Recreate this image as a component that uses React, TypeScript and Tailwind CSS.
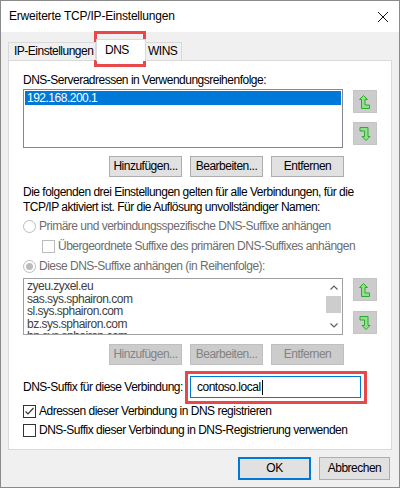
import React from 'react';

const font = { fontFamily: '"Liberation Sans", Arial, sans-serif' };

function ArrowUp() {
    return (
        <svg width="12" height="16" viewBox="0 0 12 16">
            <polygon points="4.5,1.5 8.5,5.5 6,5.5 6,11 10.5,11 10.5,14.5 2.5,14.5 2.5,5.5 0.5,5.5" fill="#8ee08a" stroke="#2fa82f" strokeWidth="1" />
        </svg>
    );
}

function ArrowDown() {
    return (
        <svg width="12" height="16" viewBox="0 0 12 16">
            <polygon points="1,1.5 9,1.5 9,10.5 11,10.5 7,14.5 3,10.5 5.5,10.5 5.5,5 1,5" fill="#8ee08a" stroke="#2fa82f" strokeWidth="1" />
        </svg>
    );
}

function SideButtons({ gap, top }: { gap: string; top: string }) {
    return (
        <div className={`flex flex-col ${gap} ${top}`}>
            <div className="w-[24px] h-[23px] bg-[#cccccc] border border-[#c4c4c4] flex items-center justify-center"><ArrowUp /></div>
            <div className="w-[24px] h-[23px] bg-[#cccccc] border border-[#c4c4c4] flex items-center justify-center"><ArrowDown /></div>
        </div>
    );
}

function Btn({ label, disabled }: { label: string; disabled?: boolean }) {
    return (
        <div className={`w-[73px] h-[21px] flex items-center justify-center border ${disabled ? 'bg-[#cccccc] border-[#bfbfbf] text-[#838383]' : 'bg-[#e1e1e1] border-[#adadad] text-black'}`}>
            {label}
        </div>
    );
}

function Radio({ checked }: { checked?: boolean }) {
    return (
        <span className="w-[13px] h-[13px] rounded-full border border-[#bcbcbc] bg-white flex items-center justify-center shrink-0">
            {checked && <span className="w-[7px] h-[7px] rounded-full bg-[#bcbcbc]" />}
        </span>
    );
}

function Check({ checked, disabled }: { checked?: boolean; disabled?: boolean }) {
    return (
        <span className={`w-[13px] h-[13px] border ${disabled ? 'border-[#bcbcbc]' : 'border-[#333333]'} bg-white flex items-center justify-center shrink-0`}>
            {checked && (
                <svg width="11" height="11" viewBox="0 0 11 11">
                    <polyline points="1.5,5.5 4,8 9.5,2" fill="none" stroke="#333333" strokeWidth="1.2" />
                </svg>
            )}
        </span>
    );
}

export default function App() {
    const suffixes = ['zyeu.zyxel.eu', 'sas.sys.sphairon.com', 'sl.sys.sphairon.com', 'bz.sys.sphairon.com', 'hn.sys.sphairon.com'];

    return (
        <div className="w-[400px] h-[488px] bg-[#f0f0f0] border border-[#8a8a8a] flex flex-col text-[12px] leading-[15px] tracking-[-0.5px] text-black relative overflow-hidden whitespace-nowrap" style={font}>
            {/* title bar */}
            <div className="h-[31px] bg-white flex items-center justify-between pl-[8px] pr-[10px] shrink-0">
                <span className="tracking-[-0.2px]">Erweiterte TCP/IP-Einstellungen</span>
                <svg width="12" height="12" viewBox="0 0 12 12">
                    <path d="M1 1 L11 11 M11 1 L1 11" stroke="#111" strokeWidth="1" />
                </svg>
            </div>

            <div className="px-[7px] pt-[9px] flex-col flex">
                {/* tabs */}
                <div className="flex items-end h-[19px] relative z-10">
                    <div className="h-[18px] w-[88px] pl-[5px] border border-b-0 border-[#d9d9d9] bg-[#f0f0f0] flex items-center">IP-Einstellungen</div>
                    <div className="h-[22px] -mb-[1px] w-[50px] pl-[8px] pt-[3px] border border-b-0 border-[#d9d9d9] bg-white">DNS</div>
                    <div className="h-[18px] px-[2px] w-[36px] border border-b-0 border-l-0 border-[#d9d9d9] bg-[#f0f0f0] flex items-center">WINS</div>
                </div>

                {/* panel */}
                <div className="h-[390px] bg-white border border-[#d9d9d9] px-[14px] pt-[12px]">
                    <div className="h-[15px]">DNS-Serveradressen in Verwendungsreihenfolge:</div>
                    <div className="flex gap-[10px] mt-[1px]">
                        <div className="w-[321px] h-[59px] border border-[#828790] p-[1px]">
                            <div className="bg-[#0078d7] text-white h-[14px] flex items-center pl-[2px]">192.168.200.1</div>
                        </div>
                        <SideButtons gap="gap-[9px]" top="mt-[1px]" />
                    </div>
                    <div className="flex justify-end gap-[8px] w-[321px] mt-[8px]">
                        <Btn label="Hinzufügen..." />
                        <Btn label="Bearbeiten..." />
                        <Btn label="Entfernen" />
                    </div>

                    <div className="mt-[8px] h-[30px]">
                        <div>Die folgenden drei Einstellungen gelten für alle Verbindungen, für die</div>
                        <div>TCP/IP aktiviert ist. Für die Auflösung unvollständiger Namen:</div>
                    </div>
                    <div className="flex items-center gap-[3px] mt-[2px] h-[18px] text-[#6d6d6d]">
                        <Radio />
                        <span>Primäre und verbindungsspezifische DNS-Suffixe anhängen</span>
                    </div>
                    <div className="flex items-center gap-[3px] mt-[2px] h-[18px] pl-[19px] text-[#6d6d6d]">
                        <Check disabled />
                        <span>Übergeordnete Suffixe des primären DNS-Suffixes anhängen</span>
                    </div>
                    <div className="flex items-center gap-[3px] mt-[2px] h-[18px] text-[#6d6d6d]">
                        <Radio checked />
                        <span>Diese DNS-Suffixe anhängen (in Reihenfolge):</span>
                    </div>

                    <div className="flex gap-[10px] mt-[3px]">
                        <div className="w-[321px] h-[57px] border border-[#a0a0a0] flex overflow-hidden">
                            <div className="flex-1 pl-[3px] pt-[1px] leading-[12.5px] text-[#404040] overflow-hidden">
                                {suffixes.map(s => <div key={s}>{s}</div>)}
                            </div>
                            <div className="w-[17px] flex flex-col items-center bg-white">
                                <div className="h-[17px] flex items-center justify-center">
                                    <svg width="8" height="5" viewBox="0 0 8 5"><polyline points="0.5,4.5 4,1 7.5,4.5" fill="none" stroke="#606060" strokeWidth="1.2" /></svg>
                                </div>
                                <div className="w-[15px] h-[17px] bg-[#cdcdcd]" />
                                <div className="flex-1" />
                                <div className="h-[17px] flex items-center justify-center">
                                    <svg width="8" height="5" viewBox="0 0 8 5"><polyline points="0.5,0.5 4,4 7.5,0.5" fill="none" stroke="#606060" strokeWidth="1.2" /></svg>
                                </div>
                            </div>
                        </div>
                        <SideButtons gap="gap-[10px]" top="mt-0" />
                    </div>
                    <div className="flex justify-end gap-[8px] w-[321px] mt-[9px]">
                        <Btn label="Hinzufügen..." disabled />
                        <Btn label="Bearbeiten..." disabled />
                        <Btn label="Entfernen" disabled />
                    </div>

                    <div className="flex items-center mt-[11px] h-[22px]">
                        <span className="w-[167px]">DNS-Suffix für diese Verbindung:</span>
                        <div className="w-[171px] h-[22px] border border-[#0078d7] flex items-center pl-[6px]">
                            contoso.local<span className="w-[1px] h-[15px] bg-black ml-[1px]" />
                        </div>
                    </div>
                    <div className="flex items-center gap-[3px] mt-[4px] h-[18px]">
                        <Check checked />
                        <span>Adressen dieser Verbindung in DNS registrieren</span>
                    </div>
                    <div className="flex items-center gap-[3px] mt-[1px] h-[18px]">
                        <Check />
                        <span>DNS-Suffix dieser Verbindung in DNS-Registrierung verwenden</span>
                    </div>
                </div>

                {/* dialog buttons */}
                <div className="flex justify-end gap-[8px] mt-[7px] pr-[2px]">
                    <div className="w-[73px] h-[23px] bg-[#e1e1e1] border-2 border-[#0078d7] flex items-center justify-center">OK</div>
                    <div className="w-[71px] h-[23px] bg-[#e1e1e1] border border-[#adadad] flex items-center justify-center">Abbrechen</div>
                </div>
            </div>

            {/* red annotation boxes */}
            <div className="absolute left-[93px] top-[30px] w-[52px] h-[36px] border-[3px] border-[#e8484a] pointer-events-none" />
            <div className="absolute left-[184px] top-[370px] w-[182px] h-[33px] border-[3px] border-[#e8484a] pointer-events-none" />
        </div>
    );
}
